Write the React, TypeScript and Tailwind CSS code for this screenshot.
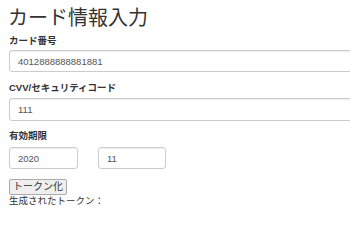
export default function App() {
  const font = { fontFamily: '"Helvetica Neue", "Liberation Sans", "Noto Sans CJK JP", sans-serif' };

  return (
    <div className="w-[350px] h-[234px] overflow-hidden bg-white text-[#333]" style={font}>
      <div className="pl-[9px] w-[460px]">
        <h1 className="pt-[6px] text-[20px] leading-[24px] font-normal -ml-[1px]">カード情報入力</h1>

        <label className="block mt-[5px] text-[9.5px] leading-[12px] font-bold">カード番号</label>
        <input
          readOnly
          value="4012888888881881"
          className="block mt-[3px] w-full h-[22px] px-[8px] text-[9.5px] text-[#555] border border-[#ccc] rounded-[3px] shadow-[inset_0_1px_1px_rgba(0,0,0,0.075)] outline-none"
        />

        <label className="block mt-[10px] text-[9.5px] leading-[12px] font-bold">CVV/セキュリティコード</label>
        <input
          readOnly
          value="111"
          className="block mt-[4px] w-full h-[23px] px-[8px] text-[9.5px] text-[#555] border border-[#ccc] rounded-[3px] shadow-[inset_0_1px_1px_rgba(0,0,0,0.075)] outline-none"
        />

        <label className="block mt-[9px] text-[9.5px] leading-[12px] font-bold">有効期限</label>
        <div className="flex gap-[20px] mt-[5px]">
          <input
            readOnly
            value="2020"
            className="block w-[69px] h-[22px] px-[8px] text-[9.5px] text-[#555] border border-[#ccc] rounded-[3px] shadow-[inset_0_1px_1px_rgba(0,0,0,0.075)] outline-none"
          />
          <input
            readOnly
            value="11"
            className="block w-[68px] h-[22px] px-[8px] text-[9.5px] text-[#555] border border-[#ccc] rounded-[3px] shadow-[inset_0_1px_1px_rgba(0,0,0,0.075)] outline-none"
          />
        </div>

        <button className="flex items-center mt-[10px] h-[16px] px-[3px] text-[10px] leading-[14px] text-[#333] bg-[#efefef] border border-[#aaa] rounded-[2px] whitespace-nowrap">
          トークン化
        </button>
        <p className="text-[9.5px] leading-[12px] text-[#333]">生成されたトークン：</p>
      </div>
    </div>
  );
}
